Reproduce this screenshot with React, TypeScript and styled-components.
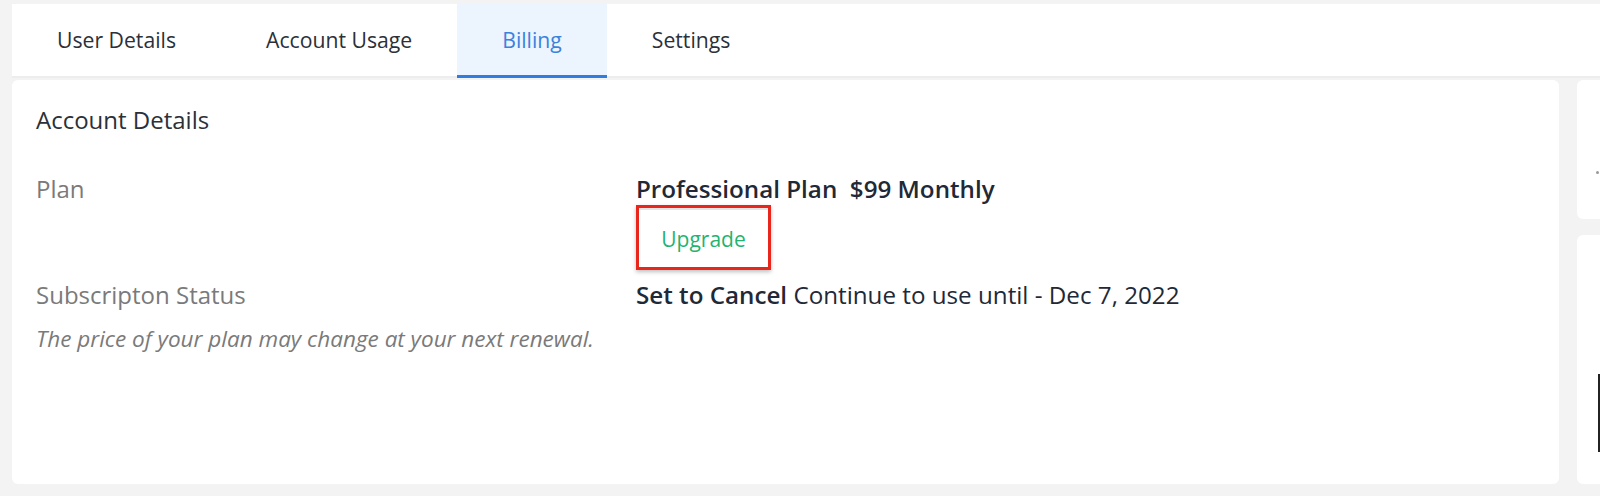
import React from "react";
import styled, { createGlobalStyle } from "styled-components";

const GlobalStyle = createGlobalStyle`
  html, body {
    margin: 0;
    padding: 0;
    background: #f3f3f3;
    font-family: "Open Sans", "Noto Sans", Arial, sans-serif;
    overflow: hidden;
  }
  * { box-sizing: border-box; }
`;

const Page = styled.div`
  width: 1600px;
  height: 496px;
  padding: 4px 0 0 12px;
  display: flex;
  flex-direction: column;
`;

const TabBar = styled.div`
  display: flex;
  height: 74px;
  background: #ffffff;
  border-bottom: 2px solid #ededed;
`;

const Tab = styled.div<{ $active?: boolean }>`
  display: flex;
  align-items: center;
  justify-content: center;
  padding: 0 45px 0;
  font-size: 21.2px;
  color: ${(p) => (p.$active ? "#3b82dd" : "#2b3039")};
  background: ${(p) => (p.$active ? "#ecf4fd" : "transparent")};
  border-bottom: 3px solid ${(p) => (p.$active ? "#2f7de1" : "transparent")};
  margin-bottom: -2px;
`;

const Body = styled.div`
  display: flex;
  gap: 18px;
  margin-top: 2px;
  height: 404px;
`;

const Card = styled.div`
  width: 1547px;
  flex-shrink: 0;
  background: #ffffff;
  border-radius: 6px;
  padding: 24px 24px;
`;

const SideColumn = styled.div`
  flex: 1;
  display: flex;
  flex-direction: column;
  gap: 16px;
`;

const SideCard = styled.div<{ $h: number }>`
  height: ${(p) => p.$h}px;
  background: #ffffff;
  border-radius: 6px 0 0 6px;
  position: relative;
`;

const SideDot = styled.span`
  position: absolute;
  left: 19px;
  top: 91px;
  width: 3px;
  height: 3px;
  background: #999;
  border-radius: 50%;
`;

const SideBar = styled.span`
  position: absolute;
  left: 21px;
  top: 139px;
  width: 2px;
  height: 78px;
  background: #222;
`;

const Heading = styled.h2`
  margin: 0;
  font-size: 24px;
  line-height: 32px;
  font-weight: 400;
  color: #2b3039;
`;

const Grid = styled.div`
  display: grid;
  grid-template-columns: 600px 1fr;
  margin-top: 37px;
  row-gap: 9px;
`;

const Label = styled.div`
  font-size: 24px;
  line-height: 32px;
  color: #7a7a7a;
`;

const Value = styled.div`
  display: flex;
  flex-direction: column;
  align-items: flex-start;
`;

const ValueLine = styled.div`
  font-size: 24.2px;
  line-height: 32px;
  color: #1f2937;
  white-space: pre;
`;

const Strong = styled.span`
  font-weight: 600;
`;

const UpgradeButton = styled.button`
  margin-top: 0;
  width: 135px;
  height: 65px;
  border: 3px solid #e8261c;
  background: #ffffff;
  box-shadow: inset 0 2px 0 #e4e4e4, 0 2px 4px rgba(0, 0, 0, 0.25);
  font-family: "Open Sans", "Noto Sans", Arial, sans-serif;
  font-size: 21px;
  color: #1fb46f;
  padding: 2px 0 0;
  cursor: pointer;
`;

const Note = styled.p`
  grid-column: 1 / span 2;
  margin: 4px 0 0;
  font-size: 22.5px;
  line-height: 30px;
  font-style: italic;
  color: #7a7a7a;
`;

export default function App() {
  return (
    <>
      <GlobalStyle />
      <Page>
        <TabBar>
          <Tab>User Details</Tab>
          <Tab>Account Usage</Tab>
          <Tab $active>Billing</Tab>
          <Tab>Settings</Tab>
        </TabBar>
        <Body>
          <Card>
            <Heading>Account Details</Heading>
            <Grid>
              <Label>Plan</Label>
              <Value>
                <ValueLine>
                  <Strong>Professional Plan  $99 Monthly</Strong>
                </ValueLine>
                <UpgradeButton>Upgrade</UpgradeButton>
              </Value>
              <Label>Subscripton Status</Label>
              <Value>
                <ValueLine>
                  <Strong>Set to Cancel</Strong> Continue to use until - Dec 7, 2022
                </ValueLine>
              </Value>
              <Note>The price of your plan may change at your next renewal.</Note>
            </Grid>
          </Card>
          <SideColumn>
            <SideCard $h={139}>
              <SideDot />
            </SideCard>
            <SideCard $h={249}>
              <SideBar />
            </SideCard>
          </SideColumn>
        </Body>
      </Page>
    </>
  );
}
